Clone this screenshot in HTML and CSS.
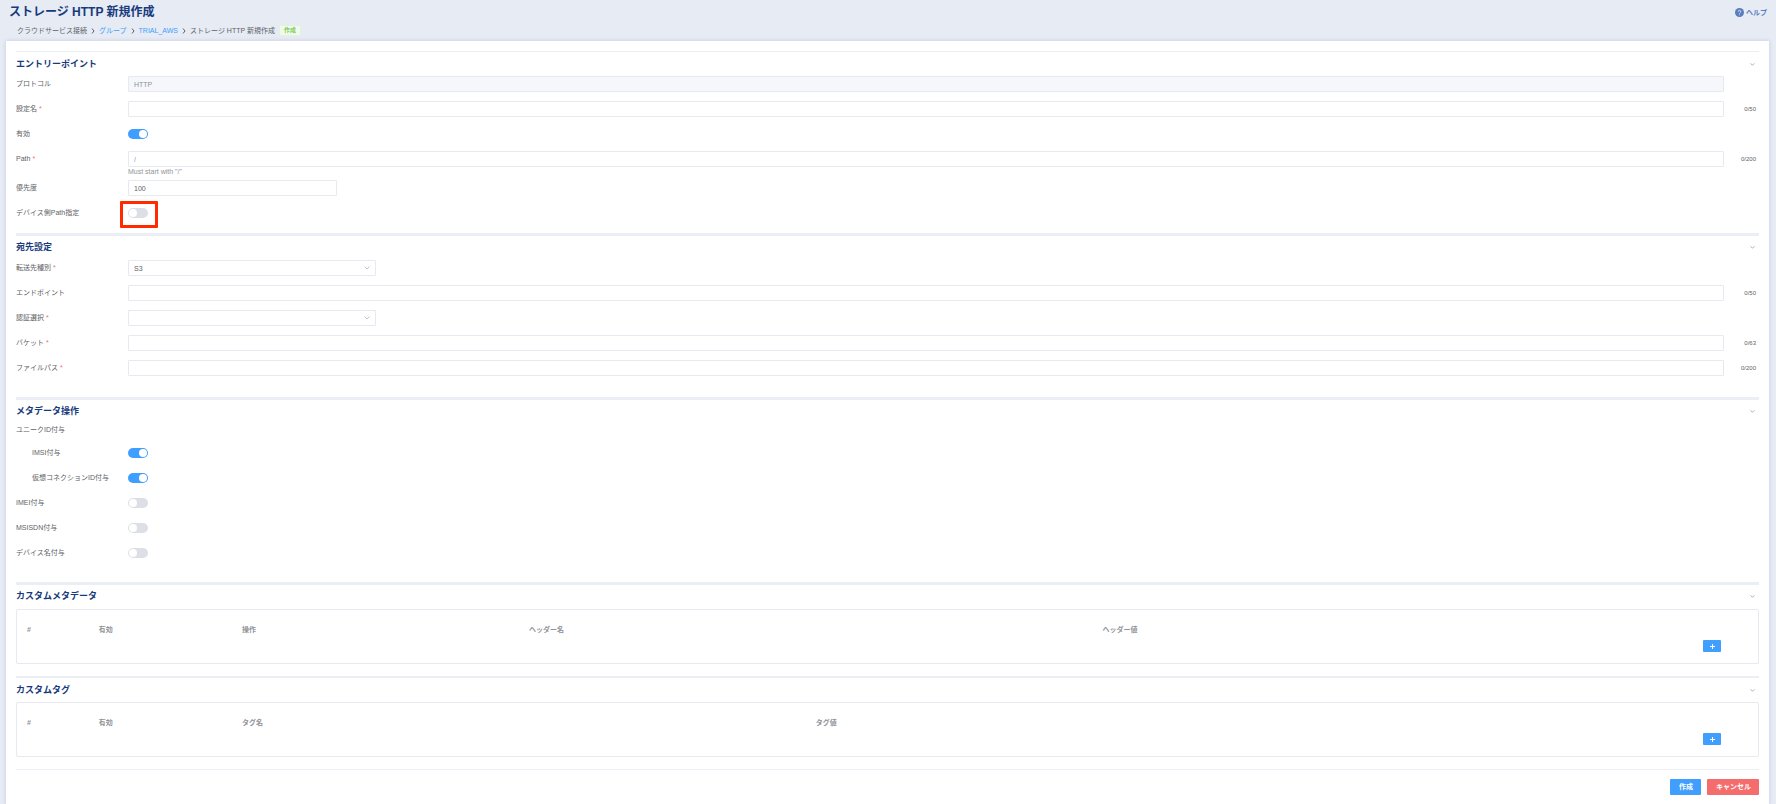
FILE: index.html
```html
<!DOCTYPE html>
<html lang="ja">
<head>
  <meta charset="UTF-8">
  <meta name="viewport" content="width=device-width, initial-scale=1.0">
  <title>ストレージ HTTP 新規作成</title>
  <link rel="stylesheet" href="styles.css">
</head>
<body>
  <header class="page-header">
    <div class="header-top">
      <h1 class="page-title">ストレージ HTTP 新規作成</h1>
      <a href="#" class="help-link">
        <svg width="9" height="9" viewBox="0 0 18 18">
          <circle cx="9" cy="9" r="9" fill="currentColor"/>
          <path d="M6.5 7.2a2.5 2.5 0 1 1 3.6 2.2c-.8.4-1.1.8-1.1 1.6M9 13v1.6" fill="none" stroke="#e6ebf4" stroke-width="1.8"/>
        </svg>
        ヘルプ
      </a>
    </div>
    <nav class="breadcrumb">
      <span>クラウドサービス接続</span>
      <svg class="crumb-arrow" viewBox="0 0 4 6"><path d="M1 .5 3 3 1 5.500"/></svg>
      <a href="#">グループ</a>
      <svg class="crumb-arrow" viewBox="0 0 4 6"><path d="M1 .5 3 3 1 5.500"/></svg>
      <a href="#">TRIAL_AWS</a>
      <svg class="crumb-arrow" viewBox="0 0 4 6"><path d="M1 .5 3 3 1 5.500"/></svg>
      <span>ストレージ HTTP 新規作成</span>
      <span class="tag">作成</span>
    </nav>
  </header>

  <main class="card">
    <form>
      <!-- Entry point -->
      <section class="section section-first">
        <div class="section-head">
          <h2>エントリーポイント</h2>
          <button type="button" class="collapse" aria-label="エントリーポイント"><svg viewBox="0 0 6 4"><path d="M.5.5 3 3 5.500.5"/></svg></button>
        </div>
        <div class="form-row">
          <label for="protocol">プロトコル</label>
          <input type="text" id="protocol" class="form-control" value="HTTP" disabled>
        </div>
        <div class="form-row">
          <label for="name" class="required">設定名</label>
          <input type="text" id="name" class="form-control">
          <span class="counter">0/50</span>
        </div>
        <div class="form-row">
          <label for="enabled">有効</label>
          <input type="checkbox" id="enabled" class="switch" checked>
        </div>
        <div class="form-row">
          <label for="path" class="required">Path</label>
          <input type="text" id="path" class="form-control" placeholder="/">
          <span class="counter">0/200</span>
        </div>
        <p class="hint">Must start with "/"</p>
        <div class="form-row">
          <label for="priority">優先度</label>
          <input type="text" id="priority" class="form-control short" value="100">
        </div>
        <div class="form-row">
          <label for="device-path">デバイス側Path指定</label>
          <div class="switch-wrap highlight">
            <input type="checkbox" id="device-path" class="switch">
          </div>
        </div>
      </section>

      <!-- Destination -->
      <section class="section">
        <div class="section-head">
          <h2>宛先設定</h2>
          <button type="button" class="collapse" aria-label="宛先設定"><svg viewBox="0 0 6 4"><path d="M.5.5 3 3 5.500.5"/></svg></button>
        </div>
        <div class="form-row">
          <label for="dest-type" class="required">転送先種別</label>
          <div class="select-wrap">
            <select id="dest-type" class="form-control"><option>S3</option></select>
            <svg viewBox="0 0 6 4"><path d="M.5.5 3 3 5.500.5"/></svg>
          </div>
        </div>
        <div class="form-row">
          <label for="endpoint">エンドポイント</label>
          <input type="text" id="endpoint" class="form-control">
          <span class="counter">0/50</span>
        </div>
        <div class="form-row">
          <label for="auth" class="required">認証選択</label>
          <div class="select-wrap">
            <select id="auth" class="form-control"><option></option></select>
            <svg viewBox="0 0 6 4"><path d="M.5.5 3 3 5.500.5"/></svg>
          </div>
        </div>
        <div class="form-row">
          <label for="bucket" class="required">バケット</label>
          <input type="text" id="bucket" class="form-control">
          <span class="counter">0/63</span>
        </div>
        <div class="form-row">
          <label for="file-path" class="required">ファイルパス</label>
          <input type="text" id="file-path" class="form-control">
          <span class="counter">0/200</span>
        </div>
      </section>

      <!-- Metadata -->
      <section class="section">
        <div class="section-head">
          <h2>メタデータ操作</h2>
          <button type="button" class="collapse" aria-label="メタデータ操作"><svg viewBox="0 0 6 4"><path d="M.5.5 3 3 5.500.5"/></svg></button>
        </div>
        <p class="group-label">ユニークID付与</p>
        <div class="form-row">
          <label for="imsi" class="indent">IMSI付与</label>
          <input type="checkbox" id="imsi" class="switch" checked>
        </div>
        <div class="form-row">
          <label for="connection-id" class="indent">仮想コネクションID付与</label>
          <input type="checkbox" id="connection-id" class="switch" checked>
        </div>
        <div class="form-row">
          <label for="imei">IMEI付与</label>
          <input type="checkbox" id="imei" class="switch">
        </div>
        <div class="form-row">
          <label for="msisdn">MSISDN付与</label>
          <input type="checkbox" id="msisdn" class="switch">
        </div>
        <div class="form-row">
          <label for="device-name">デバイス名付与</label>
          <input type="checkbox" id="device-name" class="switch">
        </div>
      </section>

      <!-- Custom metadata -->
      <section class="section">
        <div class="section-head">
          <h2>カスタムメタデータ</h2>
          <button type="button" class="collapse" aria-label="カスタムメタデータ"><svg viewBox="0 0 6 4"><path d="M.5.5 3 3 5.500.5"/></svg></button>
        </div>
        <div class="table-box">
          <table>
            <colgroup><col class="col-1"><col class="col-2"><col class="col-4"><col class="col-8"><col class="col-8"><col class="col-1"></colgroup>
            <thead>
              <tr><th>#</th><th>有効</th><th>操作</th><th>ヘッダー名</th><th>ヘッダー値</th><th></th></tr>
            </thead>
            <tbody>
              <tr><td colspan="5"></td><td><button type="button" class="btn btn-add" aria-label="ヘッダーを追加"><svg viewBox="0 0 5 5"><path d="M2.500 0v5M0 2.500h5"/></svg></button></td></tr>
            </tbody>
          </table>
        </div>
      </section>

      <!-- Custom tags -->
      <section class="section section-thin">
        <div class="section-head">
          <h2>カスタムタグ</h2>
          <button type="button" class="collapse" aria-label="カスタムタグ"><svg viewBox="0 0 6 4"><path d="M.5.5 3 3 5.500.5"/></svg></button>
        </div>
        <div class="table-box">
          <table>
            <colgroup><col class="col-1"><col class="col-2"><col class="col-8"><col class="col-12"><col class="col-1"></colgroup>
            <thead>
              <tr><th>#</th><th>有効</th><th>タグ名</th><th>タグ値</th><th></th></tr>
            </thead>
            <tbody>
              <tr><td colspan="4"></td><td><button type="button" class="btn btn-add" aria-label="タグを追加"><svg viewBox="0 0 5 5"><path d="M2.500 0v5M0 2.500h5"/></svg></button></td></tr>
            </tbody>
          </table>
        </div>
      </section>

      <div class="form-footer">
        <button type="submit" class="btn btn-primary">作成</button>
        <button type="button" class="btn btn-danger">キャンセル</button>
      </div>
    </form>
  </main>
</body>
</html>
```

FILE: styles.css
```css
:root {
  --primary: #409eff;
  --danger: #f56c6c;
  --navy: #173a7c;
  --text: #606266;
  --muted: #909399;
  --border: #e6e9f0;
  --line: #ebeef5;
  --bg: #e6ebf4;
}

* {
  margin: 0;
  padding: 0;
  box-sizing: border-box;
  font-family: "Liberation Sans", "Noto Sans CJK JP", sans-serif;
}

body {
  background: var(--bg);
  color: var(--text);
  font-size: 7px;
  line-height: 10px;
  min-height: 100vh;
  display: flex;
  flex-direction: column;
}

a {
  color: var(--primary);
  text-decoration: none;
}

.page-header {
  padding: 4px 9px 5px;
}

.header-top {
  display: flex;
  justify-content: space-between;
  align-items: center;
}

.page-title {
  color: var(--navy);
  font-size: 12px;
  line-height: 17px;
  font-weight: 600;
}

.help-link {
  display: flex;
  align-items: center;
  gap: 2px;
  color: #5a7dbd;
  font-weight: 600;
}

.breadcrumb {
  display: flex;
  align-items: center;
  gap: 4px;
  padding: 4px 0 0 8px;
}

.crumb-arrow {
  width: 4px;
  height: 6px;
  fill: none;
  stroke: var(--text);
}

.tag {
  padding: 0 4px;
  border: 1px solid #e1f3d8;
  border-radius: 1px;
  background: #f0f9eb;
  color: #67c23a;
  font-size: 6px;
  font-weight: 500;
  line-height: 9px;
}

.card {
  flex: 1;
  margin: 0 7px 0 6px;
  padding: 10px 10px 9px;
  background: #fff;
  box-shadow: 0 0 4px rgba(60, 80, 140, 0.2);
}

/* Sections */
.section {
  border-top: 3px solid var(--line);
  padding-bottom: 12px;
}

.section-first {
  border-top-width: 1px;
  padding-bottom: 3px;
}

.section-thin {
  border-top-width: 2px;
}

.section-head {
  display: flex;
  justify-content: space-between;
  align-items: center;
  height: 22px;
  margin-bottom: 2px;
}

.section-first .section-head,
.section-thin .section-head {
  height: 24px;
  margin-bottom: 0;
}

.section-head h2 {
  color: var(--navy);
  font-size: 9px;
  line-height: 14px;
  font-weight: 700;
}

.collapse {
  display: flex;
  padding: 4px;
  border: none;
  background: none;
  cursor: pointer;
}

.collapse svg {
  width: 5px;
  height: 3px;
  fill: none;
  stroke: var(--muted);
}

/* Form rows */
.form-row {
  display: grid;
  grid-template-columns: 112px 1fr 35px;
  align-items: center;
  height: 16px;
  margin-bottom: 9px;
}

.indent {
  padding-left: 16px;
}

.required::after {
  content: "*";
  color: var(--danger);
  margin-left: 2px;
}

.form-control {
  width: 100%;
  height: 16px;
  padding: 0 5px;
  border: 1px solid var(--border);
  border-radius: 1px;
  background: #fff;
  color: var(--text);
  font-size: 7px;
  outline: none;
}

.form-control:focus {
  border-color: var(--primary);
}

.form-control:disabled {
  background: #f5f7fa;
  color: var(--muted);
}

.form-control::placeholder {
  color: var(--muted);
}

.short {
  width: 209px;
}

.counter {
  padding-right: 3px;
  font-size: 6px;
  text-align: right;
}

.hint {
  margin: -9px 0 4px 112px;
  color: var(--muted);
  line-height: 9px;
}

.group-label {
  line-height: 12px;
  margin-bottom: 9px;
}

.select-wrap {
  position: relative;
  width: 248px;
}

.select-wrap select {
  display: block;
  appearance: none;
}

.select-wrap svg {
  position: absolute;
  top: 6px;
  right: 6px;
  width: 6px;
  height: 4px;
  fill: none;
  stroke: #c0c4cc;
  pointer-events: none;
}

.switch {
  appearance: none;
  display: flex;
  align-items: center;
  width: 20px;
  height: 10px;
  padding: 0 1px;
  border-radius: 5px;
  background: #dcdfe6;
  cursor: pointer;
}

.switch::before {
  content: "";
  width: 8px;
  height: 8px;
  border-radius: 50%;
  background: #fff;
}

.switch:checked {
  justify-content: flex-end;
  background: var(--primary);
}

.switch-wrap {
  position: relative;
  width: 20px;
}

.highlight::after {
  content: "";
  position: absolute;
  inset: -7px -10px -10px -8px;
  border: 3px solid #ff2a00;
  border-radius: 1px;
  pointer-events: none;
}

/* Tables */
.table-box {
  height: 55px;
  padding: 9px 10px;
  border: 1px solid var(--border);
  border-radius: 2px;
}

table {
  width: 100%;
  table-layout: fixed;
  border-collapse: collapse;
}

.col-1 { width: calc(100% / 24); }
.col-2 { width: calc(100% / 12); }
.col-4 { width: calc(100% / 6); }
.col-8 { width: calc(100% / 3); }
.col-12 { width: 50%; }

th {
  height: 20px;
  padding-top: 2px;
  color: var(--muted);
  font-weight: 700;
  text-align: left;
}

td {
  padding-top: 1px;
}

/* Buttons */
.btn {
  border: none;
  border-radius: 1px;
  color: #fff;
  font-size: 7px;
  font-weight: 600;
  line-height: 16px;
  cursor: pointer;
}

.btn-add {
  display: flex;
  justify-content: center;
  align-items: center;
  width: 18px;
  height: 12px;
  margin: 0 auto;
  background: var(--primary);
}

.btn-add svg {
  width: 5px;
  height: 5px;
  stroke: #fff;
}

.btn-primary {
  padding: 0 8px 0 9px;
  background: var(--primary);
}

.btn-danger {
  padding: 0 8px 0 9px;
  background: var(--danger);
}

.form-footer {
  display: flex;
  justify-content: flex-end;
  gap: 6px;
  padding-top: 9px;
  border-top: 1px solid var(--line);
}
```
